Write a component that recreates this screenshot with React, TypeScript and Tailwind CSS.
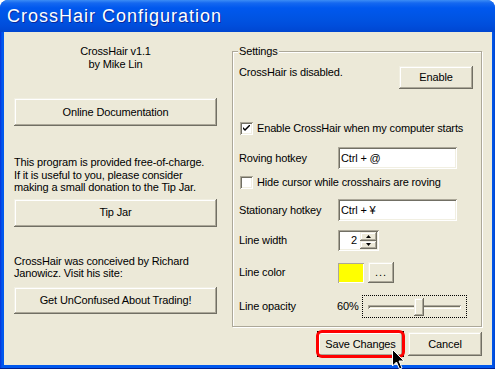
import type { ReactNode } from "react";

const raised =
  "bg-[#ece9d8] shadow-[inset_-1px_-1px_0_#716f64,inset_1px_1px_0_#f1efe2,inset_-2px_-2px_0_#aca899,inset_2px_2px_0_#ffffff]";
const sunken =
  "bg-white shadow-[inset_1px_1px_0_#aca899,inset_-1px_-1px_0_#ffffff,inset_2px_2px_0_#716f64,inset_-2px_-2px_0_#f1efe2]";

function Btn({ children, className = "" }: { children: ReactNode; className?: string }) {
  return <div className={`flex items-center justify-center ${raised} ${className}`}>{children}</div>;
}

function Check({ checked, label }: { checked?: boolean; label: string }) {
  return (
    <div className="flex items-center h-[13px] ml-[1px]">
      <div className={`w-[13px] h-[13px] flex items-center justify-center ${sunken}`}>
        {checked && (
          <svg width="7" height="7" viewBox="0 0 7 7">
            <path d="M0 2 L0 4 L2 6 L7 1 L7 -1 L2 4 Z" fill="#000" />
          </svg>
        )}
      </div>
      <span className="ml-[4px]">{label}</span>
    </div>
  );
}

export default function App() {
  return (
    <div className="w-[495px] h-[369px] flex flex-col rounded-t-[8px] overflow-hidden bg-[#0054e3] font-['Liberation_Sans',Arial,sans-serif] text-[11px] leading-[13px] tracking-[-0.15px] text-black">
      {/* Title bar */}
      <div className="h-[32px] shrink-0 flex items-center pl-[7px] bg-[linear-gradient(to_bottom,#3c8df5_0px,#1568f0_3px,#0058ee_8px,#0054e3_18px,#004ddb_26px,#0046d0_32px)]">
        <span className="text-white text-[18px] leading-[20px] tracking-[1px] [text-shadow:1px_1px_0_#0a2a9c]">
          CrossHair Configuration
        </span>
      </div>

      {/* Frame */}
      <div className="flex-1 flex flex-col pl-[4px] pr-[3px] pb-[4px] bg-[linear-gradient(to_right,#0831d9_0px,#0058ee_2px,#0058ee_492px,#0046d0_495px)] shadow-[inset_0_-1px_0_#001f8f]">
        <div className="flex-1 flex flex-col bg-[#ece9d8] relative">
          <div className="flex pt-[13px] pl-[10px]">
            {/* Left column */}
            <div className="w-[203px] flex flex-col">
              <div className="text-center">
                <div>CrossHair v1.1</div>
                <div>by Mike Lin</div>
              </div>
              <Btn className="mt-[27px] h-[28px]">Online Documentation</Btn>
              <div className="mt-[30px] leading-[12.5px]">
                <div>This program is provided free-of-charge.</div>
                <div>If it is useful to you, please consider</div>
                <div>making a small donation to the Tip Jar.</div>
              </div>
              <Btn className="mt-[5px] h-[28px]">Tip Jar</Btn>
              <div className="mt-[28px] leading-[12.5px]">
                <div>CrossHair was conceived by Richard</div>
                <div>Janowicz. Visit his site:</div>
              </div>
              <Btn className="mt-[7px] h-[27px]">Get UnConfused About Trading!</Btn>
            </div>

            {/* Settings group */}
            <div className="ml-[15px] mt-[6px] w-[250px] border border-[#aca899] shadow-[inset_1px_1px_0_#ffffff,1px_1px_0_#ffffff] pl-[6px] pr-[8px] pb-[8px] flex flex-col">
              <div className="-mt-[7px] w-fit px-[1px] -translate-x-[1px] bg-[#ece9d8]">Settings</div>

              <div className="mt-[8px] flex justify-between items-start">
                <span>CrossHair is disabled.</span>
                <Btn className="w-[74px] h-[23px]">Enable</Btn>
              </div>

              <div className="mt-[33px]">
                <Check checked label="Enable CrossHair when my computer starts" />
              </div>

              <div className="mt-[12px] flex items-center">
                <span className="w-[99px]">Roving hotkey</span>
                <div className={`w-[119px] h-[22px] flex items-center pl-[3px] ${sunken}`}>Ctrl + @</div>
              </div>

              <div className="mt-[7px]">
                <Check label="Hide cursor while crosshairs are roving" />
              </div>

              <div className="mt-[10px] flex items-center">
                <span className="w-[99px]">Stationary hotkey</span>
                <div className={`w-[119px] h-[22px] flex items-center pl-[3px] ${sunken}`}>Ctrl + ¥</div>
              </div>

              <div className="mt-[9px] flex items-center">
                <span className="w-[99px]">Line width</span>
                <div className={`w-[41px] h-[21px] flex items-center ${sunken} p-[2px]`}>
                  <span className="flex-1 text-right pr-[3px]">2</span>
                  <div className="w-[17px] h-full flex flex-col">
                    <div className={`flex-1 flex items-center justify-center ${raised}`}>
                      <svg width="5" height="3" viewBox="0 0 5 3"><path d="M2.5 0 L5 3 L0 3 Z" fill="#000" /></svg>
                    </div>
                    <div className={`flex-1 flex items-center justify-center ${raised}`}>
                      <svg width="5" height="3" viewBox="0 0 5 3"><path d="M0 0 L5 0 L2.5 3 Z" fill="#000" /></svg>
                    </div>
                  </div>
                </div>
              </div>

              <div className="mt-[11px] flex items-center">
                <span className="w-[99px]">Line color</span>
                <div className="w-[26px] h-[20px] bg-[#ffff00] shadow-[inset_1px_1px_0_#aca899,inset_-1px_-1px_0_#ffffff]" />
                <Btn className="ml-[4px] w-[26px] h-[21px] tracking-[1px]">...</Btn>
              </div>

              <div className="mt-[12px] flex items-center">
                <span className="w-[98px]">Line opacity</span>
                <span className="w-[25px]">60%</span>
                <div className="w-[105px] h-[23px] border border-dotted border-black flex items-center px-[5px]">
                  <div className="flex-1 h-[4px] flex items-center shadow-[inset_1px_1px_0_#aca899,inset_-1px_-1px_0_#ffffff,inset_2px_2px_0_#716f64] bg-[#ece9d8]">
                    <div className={`ml-[46px] w-[10px] h-[18px] ${raised}`} />
                  </div>
                </div>
              </div>
            </div>
          </div>

          {/* Bottom buttons */}
          <div className="mt-[5px] flex justify-end pr-[10px] gap-[5px]">
            <div className="relative">
              <Btn className="w-[85px] h-[24px] outline outline-1 outline-black">Save Changes</Btn>
              <div className="absolute -left-[2px] -top-[2px] -right-[2px] -bottom-[2px] border-[3px] border-[#ff0000] rounded-[6px]" />
            </div>
            <Btn className="w-[74px] h-[24px]">Cancel</Btn>
          </div>

          {/* Mouse cursor */}
          <svg className="absolute left-[388px] top-[317px] overflow-visible" width="12" height="21" viewBox="0 0 12 21">
            <path d="M0.5 0.5 L0.5 17 L4.5 13 L7.5 20 L10 19 L7 12 L12 12 Z" fill="#000" stroke="#fff" strokeWidth="1" />
          </svg>
        </div>
      </div>
    </div>
  );
}
